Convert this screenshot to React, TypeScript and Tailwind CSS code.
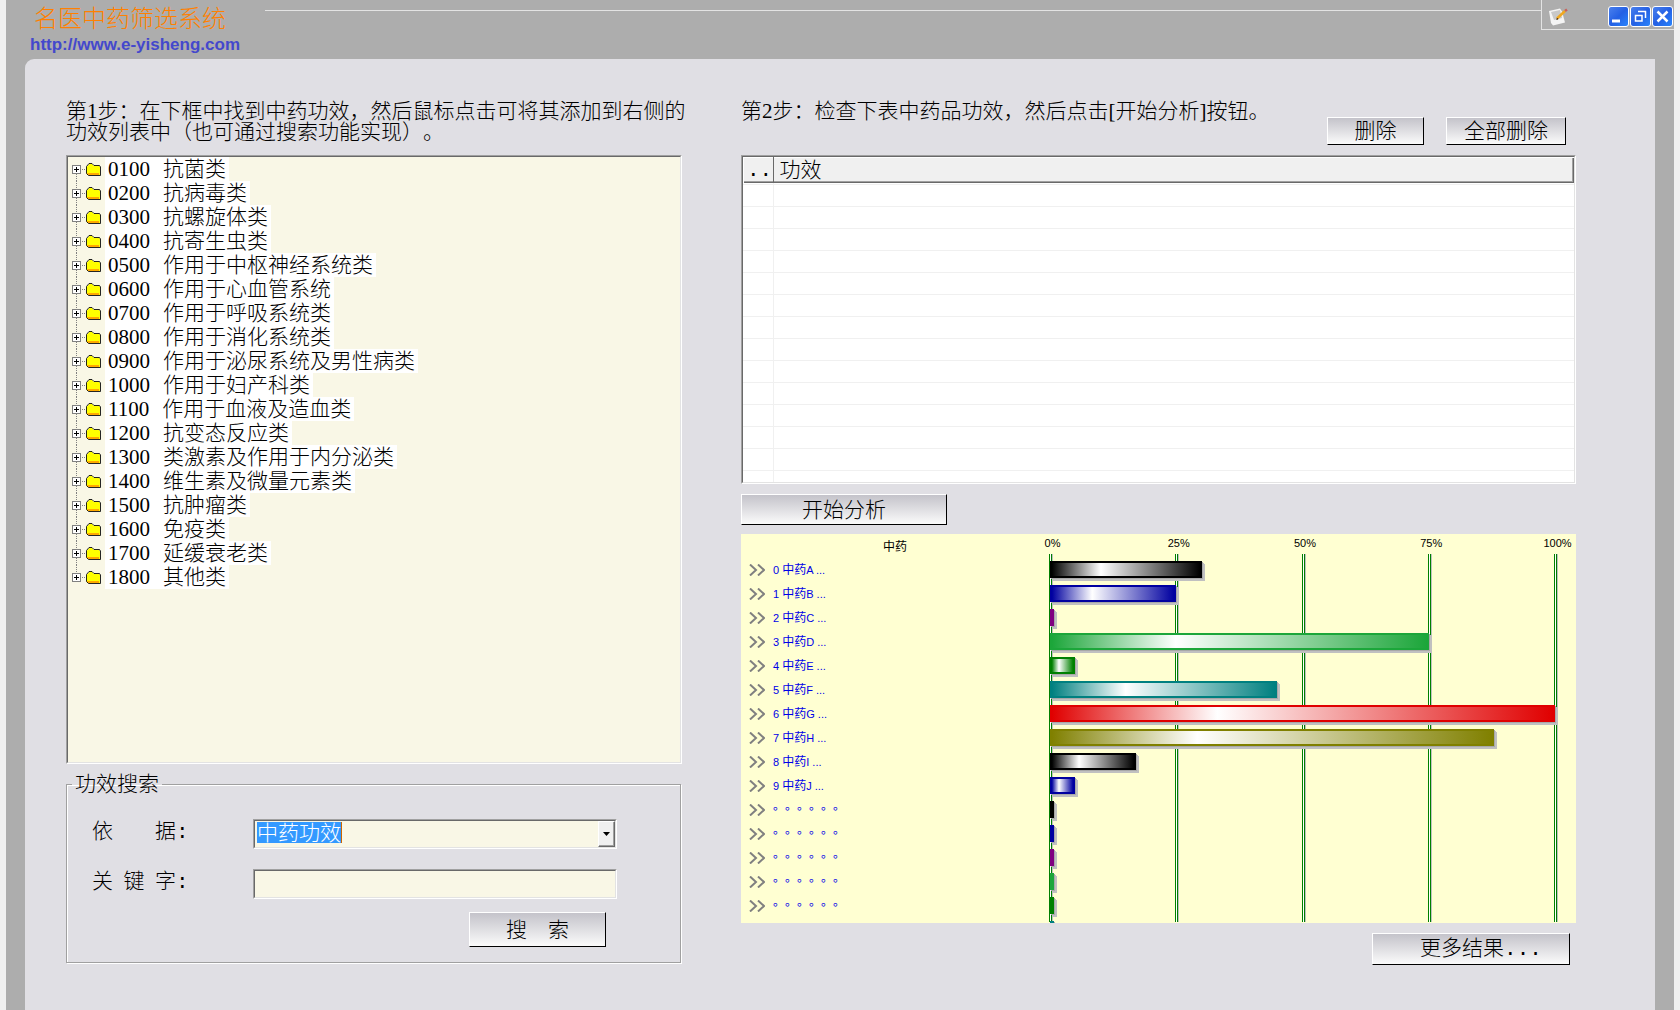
type Bar = {
    label: string;
    value: number;
    color: string;
};

const categories = [
    ['0100', '抗菌类'],
    ['0200', '抗病毒类'],
    ['0300', '抗螺旋体类'],
    ['0400', '抗寄生虫类'],
    ['0500', '作用于中枢神经系统类'],
    ['0600', '作用于心血管系统'],
    ['0700', '作用于呼吸系统类'],
    ['0800', '作用于消化系统类'],
    ['0900', '作用于泌尿系统及男性病类'],
    ['1000', '作用于妇产科类'],
    ['1100', '作用于血液及造血类'],
    ['1200', '抗变态反应类'],
    ['1300', '类激素及作用于内分泌类'],
    ['1400', '维生素及微量元素类'],
    ['1500', '抗肿瘤类'],
    ['1600', '免疫类'],
    ['1700', '延缓衰老类'],
    ['1800', '其他类'],
];

const bars: Bar[] = [
    { label: 'A', value: 30, color: '#000000' },
    { label: 'B', value: 25, color: '#0000a0' },
    { label: 'C', value: 0, color: '#800080' },
    { label: 'D', value: 75, color: '#1ca63a' },
    { label: 'E', value: 5, color: '#008000' },
    { label: 'F', value: 45, color: '#008080' },
    { label: 'G', value: 100, color: '#e00000' },
    { label: 'H', value: 88, color: '#808000' },
    { label: 'I', value: 17, color: '#000000' },
    { label: 'J', value: 5, color: '#0000a0' },
    { label: '', value: 0, color: '#000000' },
    { label: '', value: 0, color: '#0000a0' },
    { label: '', value: 0, color: '#800080' },
    { label: '', value: 0, color: '#1ca63a' },
    { label: '', value: 0, color: '#008000' },
    { label: '', value: 0, color: '#008080' },
];

const sunken =
    'border border-t-[#a0a0a0] border-l-[#a0a0a0] border-r-white border-b-white';
const sunkenInner =
    'border border-t-[#696969] border-l-[#696969] border-r-[#e3e3e3] border-b-[#e3e3e3]';
const button =
    'border border-t-white border-l-white border-r-black border-b-black bg-linear-to-b from-[#c4c3ca] to-[#fbfbfb] whitespace-pre leading-5';

function Folder() {
    return (
        <svg className="h-[13px] w-[15px]" viewBox="0 0 15 13" aria-hidden="true">
            <path d="M1 3.5 3.5 1H6l2 2h5l1 1v8H2L.5 11V3.5z" fill="#ffff00" />
            <path d="M1 10h12v2H2z" fill="#ffa800" />
            <path d="M.5 10.500V3.500L3 .5h3l2 2h5.500L14.500 4v8.500H2.500z" fill="none" stroke="#000" strokeOpacity=".85" />
        </svg>
    );
}

function CategoryTree() {
    return (
        <div className={sunken}>
            <ul className={`h-[607px] bg-[#f9f7e6] pl-1 ${sunkenInner}`}>
                {categories.map(([code, name], i) => (
                    <li key={code} className="flex h-6 items-center">
                        <svg className="h-6 w-[14px]" viewBox="0 0 14 24" shapeRendering="crispEdges" aria-hidden="true">
                            {i > 0 && <path d="M4.500 0v8" stroke="#808080" strokeDasharray="1 1" />}
                            {i < categories.length - 1 && (
                                <path d="M4.500 17v7" stroke="#808080" strokeDasharray="1 1" />
                            )}
                            <path d="M10 12.500h4" stroke="#808080" strokeDasharray="1 1" />
                            <rect x=".5" y="8.500" width="8" height="8" fill="#fff" stroke="#808080" />
                            <path d="M2 12.500h5M4.500 10v5" stroke="#000" />
                        </svg>
                        <Folder />
                        <span className="ml-1 flex h-6 gap-[13px] bg-white px-[3px]">
                            <span>{code}</span>
                            <span>{name}</span>
                        </span>
                    </li>
                ))}
            </ul>
        </div>
    );
}

function SearchBox() {
    return (
        <fieldset className="mt-[10px] mr-px h-[189px] border border-[#a0a0a0] pt-1 pl-[25px] shadow-[1px_1px_#fff,inset_1px_1px_#fff]">
            <legend className="-ml-5 px-[3px] leading-5">功效搜索</legend>
            <div className="mt-[21px] flex">
                <label htmlFor="basis" className="w-[161px] whitespace-pre">
                    {'依        据'}
                    <span className="font-['Liberation_Mono']">:</span>
                </label>
                <div className={`relative w-[364px] ${sunken}`}>
                    <select
                        id="basis"
                        className={`block h-7 w-full appearance-none bg-[#f9f7e6] bg-[linear-gradient(to_right,#3399ff_84px,#cc6600_84px)] bg-size-[85px_21px] bg-position-[2px_1px] bg-no-repeat px-[2px] pb-1 text-white outline-none ${sunkenInner}`}
                    >
                        <option>中药功效</option>
                    </select>
                    <span className="pointer-events-none absolute top-px right-px flex h-[26px] w-[17px] items-center justify-center border border-t-white border-l-white border-r-[#696969] border-b-[#696969] bg-[#f0f0f0] shadow-[inset_-1px_-1px_#a0a0a0]">
                        <svg className="h-1 w-[7px]" viewBox="0 0 7 4" aria-hidden="true">
                            <path d="M0 0h7L3.500 4z" />
                        </svg>
                    </span>
                </div>
            </div>
            <div className="mt-5 flex">
                <label htmlFor="keyword" className="w-[161px] whitespace-pre">
                    {'关  键  字'}
                    <span className="font-['Liberation_Mono']">:</span>
                </label>
                <div className={`w-[364px] ${sunken}`}>
                    <input
                        id="keyword"
                        type="text"
                        className={`block h-7 w-full bg-[#f9f7e6] px-1 outline-none ${sunkenInner}`}
                    />
                </div>
            </div>
            <div className="mt-[13px] flex w-[514px] justify-end">
                <button type="button" className={`h-[35px] w-[137px] ${button}`}>
                    {'搜    索'}
                </button>
            </div>
        </fieldset>
    );
}

function EffectTable() {
    return (
        <div className={sunken}>
            <div className={`h-[327px] overflow-hidden bg-white ${sunkenInner}`}>
                <table className="w-full table-fixed border-collapse text-left">
                    <thead>
                        <tr className="h-[25px] bg-[#f0f0f0] shadow-[inset_1px_1px_#fff,inset_-1px_-1px_#696969,inset_-2px_-2px_#a0a0a0]">
                            <th className="w-[30px] border-r border-[#696969] pl-1 font-light">
                                <span className="font-['Liberation_Mono']">..</span>
                            </th>
                            <th className="pl-[6px] font-light">功效</th>
                        </tr>
                    </thead>
                    <tbody>
                        <tr className="h-px">
                            <td className="border-r border-b border-[#f0f0f0]" />
                            <td className="border-b border-[#f0f0f0]" />
                        </tr>
                        {Array.from({ length: 14 }, (_, i) => (
                            <tr key={i} className="h-[22px]">
                                <td className="border-r border-b border-[#f0f0f0]" />
                                <td className="border-b border-[#f0f0f0]" />
                            </tr>
                        ))}
                    </tbody>
                </table>
            </div>
        </div>
    );
}

function ResultChart() {
    return (
        <div className="mt-[9px] flex h-[389px] overflow-hidden bg-[#ffffd2] font-['Liberation_Sans','Noto_Sans_CJK_SC',sans-serif] text-[11px] font-normal">
            <div className="w-[308px] shrink-0">
                <div className="h-6 pt-px text-center text-xs leading-6">中药</div>
                {bars.slice(0, 15).map((bar, i) => (
                    <div key={i} className="flex h-6 items-center pl-2 text-[#0000e8]">
                        <svg className="mr-2 h-3 w-4" viewBox="0 0 16 12" aria-hidden="true">
                            <path d="M1 .5 7 6l-6 5.500M9 .5 15 6l-6 5.500" fill="none" stroke="#808080" strokeWidth="2" />
                        </svg>
                        {bar.label ? (
                            <span>
                                {i} <span className="text-xs">中药</span>
                                {bar.label} ...
                            </span>
                        ) : (
                            <span className="h-6 text-xs leading-4">。。。。。。</span>
                        )}
                    </div>
                ))}
            </div>
            <div className="mr-[19px] flex-1">
                <div className="-mr-[2px] flex h-5 justify-between pl-[2px] leading-[18px]">
                    {[0, 25, 50, 75, 100].map((n) => (
                        <span key={n} className="flex w-[3px] justify-center">
                            {n}%
                        </span>
                    ))}
                </div>
                <div className="relative h-[368px]">
                    <div className="flex h-full justify-between">
                        {[0, 25, 50, 75, 100].map((n) => (
                            <span
                                key={n}
                                className="w-[3px] border-x border-[#008000] bg-white shadow-[1px_0_#c0c0c0]"
                            />
                        ))}
                    </div>
                    <div className="absolute top-[7px] right-[2px] left-px flex flex-col gap-[7px]">
                        {bars.map((bar, i) => (
                            <div
                                key={i}
                                className="h-[17px] min-w-[3px] border-2 shadow-[1px_1px_#a8a8a8,2px_2px_#c0c0c0,3px_3px_#c0c0c0]"
                                style={{
                                    width: `${bar.value}%`,
                                    borderColor: bar.color,
                                    background: `linear-gradient(to right, ${bar.color}, #fff 33%, ${bar.color})`,
                                }}
                            />
                        ))}
                    </div>
                </div>
            </div>
        </div>
    );
}

function NoteIcon() {
    return (
        <svg className="h-[18px] w-5" viewBox="0 0 20 18" aria-hidden="true">
            <path d="M1 3 12 .5l2 3 3 11-12 3L3 15z" fill="#f4f4f4" />
            <path d="M3 4l9-2 2 8-8 2z" fill="#c8c8c8" />
            <path d="M9 10.500 17 3" stroke="#f0a820" strokeWidth="2.500" />
            <path d="M17 3l2-1.500" stroke="#c86058" strokeWidth="2.500" />
            <path d="M8.500 11.500l1.500-1" stroke="#402000" strokeWidth="1.500" />
        </svg>
    );
}

function WindowButton({ label, children }: { label: string; children: React.ReactNode }) {
    return (
        <button
            type="button"
            aria-label={label}
            className="h-[21px] w-[21px] rounded-[3px] border border-white bg-linear-to-br from-[#4a80ee] via-[#2460e4] to-[#2a84fc]"
        >
            <svg className="h-[19px] w-[19px]" viewBox="0 0 19 19" fill="none" stroke="#fff" strokeWidth="2" aria-hidden="true">
                {children}
            </svg>
        </button>
    );
}

export default function App() {
    return (
        <div
            lang="zh-CN"
            className="flex min-h-screen flex-col bg-[#f0f0f0] px-[6px] font-['Liberation_Serif','Noto_Sans_CJK_SC',serif] text-[21px] leading-6 font-light text-black [text-spacing-trim:space-all]"
        >
            <div className="flex flex-1 flex-col bg-[#adadad] pr-[19px] pl-[19px]">
                <header className="-mr-[19px] flex h-[59px]">
                    <div className="w-60 pt-[7px] pl-[5px]">
                        <h1 className="pl-1 text-2xl leading-6 text-[#ff8000]">名医中药筛选系统</h1>
                        <a
                            href="http://www.e-yisheng.com"
                            className="block font-['Liberation_Sans'] text-[17px] leading-7 font-bold text-[#4448cc]"
                        >
                            http://www.e-yisheng.com
                        </a>
                    </div>
                    <div className="mt-[10px] h-px flex-1 bg-[#e3e3e3]" />
                    <div className="flex h-[30px] w-[133px] items-start border-b border-l border-[#e3e3e3] pt-[6px] pr-px pl-[6px]">
                        <span className="mt-[2px] mr-auto">
                            <NoteIcon />
                        </span>
                        <div className="flex gap-px">
                            <WindowButton label="最小化">
                                <path d="M3 14h8" strokeWidth="3" />
                            </WindowButton>
                            <WindowButton label="还原">
                                <path d="M7 4.500h7.500v6.500" strokeWidth="1.500" />
                                <path d="M4.500 8.500h6.500v5.500H4.500z" strokeWidth="1.500" />
                            </WindowButton>
                            <WindowButton label="关闭">
                                <path d="m4.500 4.500 10 10m0-10-10 10" strokeWidth="2.500" />
                            </WindowButton>
                        </div>
                    </div>
                </header>

                <main className="flex flex-1 items-start gap-[59px] rounded-tl-[9px] bg-[#e0dfe4] pt-10 pr-[79px] pl-[41px]">
                    <section className="w-[616px] shrink-0">
                        <p className="-mr-2 mb-3 pt-[2px] leading-[21px]">
                            第1步：在下框中找到中药功效，然后鼠标点击可将其添加到右侧的
                            <br />
                            功效列表中（也可通过搜索功能实现）。
                        </p>
                        <CategoryTree />
                        <SearchBox />
                    </section>

                    <section className="min-w-0 flex-1">
                        <div className="flex h-14 pt-[2px] pr-[10px] leading-[21px]">
                            <p className="w-[560px] whitespace-nowrap">
                                第2步：检查下表中药品功效，然后点击[开始分析]按钮。
                            </p>
                            <div className="mt-4 ml-auto flex gap-[22px]">
                                <button type="button" className={`h-7 w-[97px] ${button}`}>
                                    删除
                                </button>
                                <button type="button" className={`h-7 w-[120px] ${button}`}>
                                    全部删除
                                </button>
                            </div>
                        </div>
                        <EffectTable />
                        <button type="button" className={`mt-[10px] block h-[31px] w-[206px] ${button}`}>
                            开始分析
                        </button>
                        <ResultChart />
                        <div className="mt-[10px] flex justify-end pr-[6px]">
                            <button type="button" className={`h-8 w-[198px] pl-5 ${button}`}>
                                更多结果<span className="font-['Liberation_Mono']">...</span>
                            </button>
                        </div>
                    </section>
                </main>
            </div>
        </div>
    );
}
